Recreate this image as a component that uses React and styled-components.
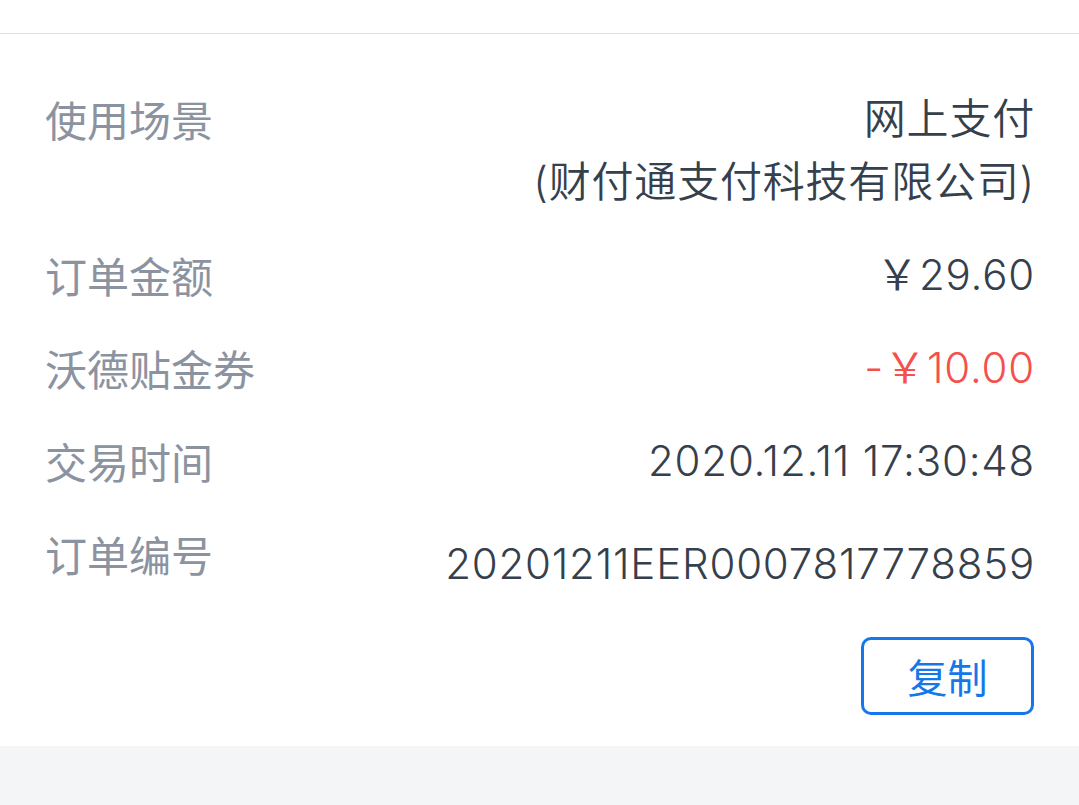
import React from "react";
import styled, { createGlobalStyle } from "styled-components";

const Global = createGlobalStyle`
  html, body { margin: 0; padding: 0; background: #f4f5f7; }
  body { font-family: Inter, "Noto Sans CJK SC", sans-serif; -webkit-font-smoothing: antialiased; }
`;

const Page = styled.div`
  width: 1079px;
  min-height: 805px;
  background: #f4f5f7;
`;

const TopBar = styled.div`
  height: 33px;
  background: #ffffff;
  border-bottom: 1px solid #e2e2e2;
`;

const Card = styled.section`
  background: #ffffff;
  padding: 53px 45px 31px 45px;
  display: flex;
  flex-direction: column;
`;

const Row = styled.div`
  display: flex;
  justify-content: space-between;
  align-items: flex-start;
  margin-bottom: ${(p) => (p.$last ? 0 : 30)}px;
`;

const Label = styled.div`
  font-family: "Noto Sans CJK SC", sans-serif;
  font-size: 42px;
  line-height: 63px;
  color: #8b93a1;
  white-space: nowrap;
`;

const Value = styled.div`
  font-family: Inter, "Noto Sans CJK SC", sans-serif;
  font-size: 42px;
  font-weight: 350;
  line-height: 63px;
  letter-spacing: 0.8px;
  margin-right: -1px;
  color: ${(p) => (p.$tone === "red" ? "#f5504c" : "#363f4c")};
  text-align: right;
  padding-top: ${(p) => p.$offset || 0}px;
  white-space: nowrap;
`;

const Actions = styled.div`
  display: flex;
  justify-content: flex-end;
  margin-top: 42px;
`;

const CopyButton = styled.button`
  width: 173px;
  height: 78px;
  box-sizing: border-box;
  border: 3px solid #1677ea;
  border-radius: 10px;
  background: #ffffff;
  color: #1677ea;
  font-family: "Noto Sans CJK SC", sans-serif;
  font-size: 40px;
  padding: 0;
  cursor: pointer;
`;

const Footer = styled.div`
  height: 60px;
  background: #f4f5f7;
`;

export default function App() {
  return (
    <Page>
      <Global />
      <TopBar />
      <Card>
        <Row>
          <Label>使用场景</Label>
          <Value>
            网上支付
            <br />
            (财付通支付科技有限公司)
          </Value>
        </Row>
        <Row>
          <Label>订单金额</Label>
          <Value>￥29.60</Value>
        </Row>
        <Row>
          <Label>沃德贴金券</Label>
          <Value $tone="red">-￥10.00</Value>
        </Row>
        <Row>
          <Label>交易时间</Label>
          <Value>2020.12.11 17:30:48</Value>
        </Row>
        <Row $last>
          <Label>订单编号</Label>
          <Value $offset={10}>20201211EER0007817778859</Value>
        </Row>
        <Actions>
          <CopyButton>复制</CopyButton>
        </Actions>
      </Card>
      <Footer />
    </Page>
  );
}
